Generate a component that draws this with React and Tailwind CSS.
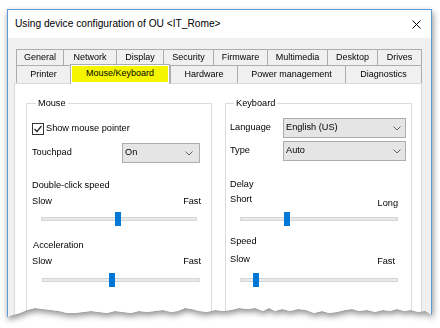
import React from "react";

const rowOne = [
  { label: "General", w: "w-[47px]" },
  { label: "Network", w: "w-[53px]" },
  { label: "Display", w: "w-[47px]" },
  { label: "Security", w: "w-[50px]" },
  { label: "Firmware", w: "w-[54px]" },
  { label: "Multimedia", w: "w-[60px]" },
  { label: "Desktop", w: "w-[50px]" },
  { label: "Drives", w: "w-[45px]" },
];

const rowTwo = [
  { label: "Printer", w: "w-[54px]" },
  { label: "Mouse/Keyboard", w: "w-[100px]", selected: true },
  { label: "Hardware", w: "w-[67px]" },
  { label: "Power management", w: "w-[108px]" },
  { label: "Diagnostics", w: "w-[77px]" },
];

const Tab = ({ tab, last }) => {
  if (tab.selected) {
    return (
      <div
        className={`${tab.w} relative z-10 -mb-[1px] flex h-[20px] border-x border-t border-[#adadad] bg-white px-[1px] pb-[2px] pt-[1px]`}
      >
        <div className="flex flex-1 items-center justify-center bg-[#f5f500]">{tab.label}</div>
      </div>
    );
  }
  return (
    <div
      className={`${tab.w} flex h-full items-center justify-center border-l border-t border-[#adadad] bg-[#f0f0f0] ${
        last ? "border-r" : ""
      }`}
    >
      {tab.label}
    </div>
  );
};

const Select = ({ value, className }) => (
  <div
    className={`flex h-[20px] items-center justify-between border border-[#adadad] bg-[#e5e5e5] pl-[2px] ${className}`}
  >
    <span>{value}</span>
    <svg width="8" height="5" viewBox="0 0 8 5">
      <path d="M0.5 0.5 L4 4 L7.5 0.5" fill="none" stroke="#606060" strokeWidth="1" />
    </svg>
  </div>
);

const Slider = ({ pos, className }) => (
  <div className={`relative flex h-[14px] items-center ${className}`}>
    <div className="h-[4px] w-full border border-[#d6d6d6] bg-[#e7eaea]" />
    <div
      className="absolute top-0 h-[14px] w-[6px] bg-[#0078d7]"
      style={{ left: `calc(${pos}% - 3px)` }}
    />
  </div>
);

const Line = ({ children, className = "" }) => (
  <div className={`h-[14px] leading-[14px] ${className}`}>{children}</div>
);

export default function App() {
  return (
    <div className="h-[328px] w-[440px] overflow-hidden bg-white pl-[7px] pt-[9px] font-['Liberation_Sans',Arial,sans-serif] text-[9.2px] text-black">
      <div className="w-[425px] [filter:drop-shadow(1px_3px_3px_rgba(0,0,0,0.45))]">
        <div className="flex h-[312px] w-[425px] flex-col border border-[#5a9ad8] bg-[#f0f0f0] [clip-path:polygon(0_0,425px_0,425px_306px,418px_302px,411px_303px,404px_301px,397px_302px,390px_300px,383px_302px,376px_301px,368px_303px,360px_301px,352px_302px,345px_300px,338px_301px,330px_303px,322px_304px,315px_302px,307px_304px,299px_301px,291px_300px,283px_302px,275px_300px,268px_302px,262px_299px,256px_302px,248px_299px,240px_300px,232px_299px,224px_301px,216px_302px,208px_301px,200px_303px,192px_302px,185px_300px,178px_299px,171px_302px,164px_303px,156px_301px,148px_302px,140px_303px,132px_302px,124px_304px,116px_303px,108px_302px,100px_304px,92px_303px,84px_302px,76px_303px,68px_304px,60px_304px,52px_302px,44px_301px,36px_300px,28px_299px,20px_301px,13px_304px,6px_306px,0_308px)]">
          {/* Title bar */}
          <div className="flex h-[28px] shrink-0 items-center justify-between bg-white pl-[7px] pr-[10px]">
            <span className="text-[10.2px]">Using device configuration of OU &lt;IT_Rome&gt;</span>
            <svg width="9" height="9" viewBox="0 0 9 9">
              <path d="M0.5 0.5 L8.5 8.5 M8.5 0.5 L0.5 8.5" stroke="#000" strokeWidth="1" />
            </svg>
          </div>

          {/* Body */}
          <div className="flex min-h-0 flex-1 flex-col pl-[6px] pr-[9px] pt-[11px]">
            <div className="flex h-[16px] shrink-0 pl-[2px] text-[9px]">
              {rowOne.map((t, i) => (
                <Tab key={t.label} tab={t} last={i === rowOne.length - 1} />
              ))}
            </div>
            <div className="flex h-[18px] shrink-0 items-end pl-[2px] text-[9px]">
              {rowTwo.map((t, i) => (
                <Tab key={t.label} tab={t} last={i === rowTwo.length - 1} />
              ))}
            </div>

            {/* Panel */}
            <div className="grid min-h-0 flex-1 grid-cols-[186px_187px] items-start gap-x-[13px] overflow-hidden border border-[#d9d9d9] bg-white pl-[11px] pt-[13px]">
              {/* Mouse */}
              <fieldset className="h-[222px] border border-[#dcdcdc] pl-[5px] pr-[10px]">
                <legend className="ml-[4px] px-[2px] leading-[12px]">Mouse</legend>
                <div className="mt-[13px] flex h-[14px] items-center">
                  <div className="flex h-[12px] w-[12px] items-center justify-center border border-[#333] bg-white">
                    <svg width="10" height="10" viewBox="0 0 10 10">
                      <path d="M1.5 5 L4 7.5 L8.5 2" fill="none" stroke="#222" strokeWidth="1.2" />
                    </svg>
                  </div>
                  <span className="ml-[2px]">Show mouse pointer</span>
                </div>
                <div className="mt-[7px] flex h-[20px] items-center">
                  <span className="w-[90px]">Touchpad</span>
                  <Select value="On" className="mr-[1px] flex-1 pr-[6px]" />
                </div>
                <Line className="mt-[15px]">Double-click speed</Line>
                <Line className="mt-[2px] flex justify-between">
                  <span>Slow</span>
                  <span>Fast</span>
                </Line>
                <Slider pos={49.4} className="ml-[9px] mr-[4px] mt-[4px]" />
                <Line className="mt-[12px] pl-[1px]">Acceleration</Line>
                <Line className="mt-[2px] flex justify-between">
                  <span>Slow</span>
                  <span>Fast</span>
                </Line>
                <Slider pos={44.6} className="ml-[10px] mr-[1px] mt-[5px]" />
              </fieldset>

              {/* Keyboard */}
              <fieldset className="h-[222px] border border-[#dcdcdc] pl-[4px] pr-[5px]">
                <legend className="ml-[4px] px-[2px] leading-[12px]">Keyboard</legend>
                <div className="mt-[9px] flex h-[20px] items-center">
                  <span className="w-[53px]">Language</span>
                  <Select value="English (US)" className="flex-1 pr-[4px]" />
                </div>
                <div className="mt-[3px] flex h-[20px] items-center">
                  <span className="w-[53px]">Type</span>
                  <Select value="Auto" className="flex-1 pr-[4px]" />
                </div>
                <Line className="mt-[16px]">Delay</Line>
                <div className="mr-[8px] mt-[1px] flex h-[14px] items-start justify-between leading-[14px]">
                  <span>Short</span>
                  <span className="mt-[4px]">Long</span>
                </div>
                <Slider pos={29.7} className="ml-[10px] mr-[8px] mt-[6px]" />
                <Line className="mt-[8px]">Speed</Line>
                <div className="mr-[11px] mt-[4px] flex h-[14px] items-start justify-between leading-[14px]">
                  <span>Slow</span>
                  <span className="mt-[2px]">Fast</span>
                </div>
                <Slider pos={10.1} className="ml-[10px] mr-[8px] mt-[7px]" />
              </fieldset>
            </div>
          </div>
        </div>
      </div>
    </div>
  );
}
